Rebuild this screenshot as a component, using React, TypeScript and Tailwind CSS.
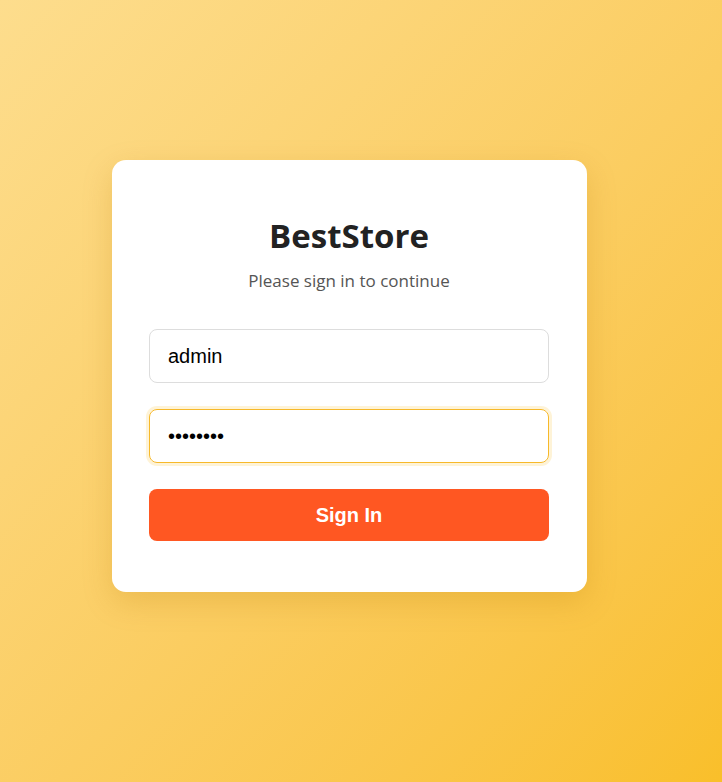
import { useState } from 'react'

export default function App() {
  const [user, setUser] = useState('admin')
  const [pw, setPw] = useState('password')

  return (
    <main className="min-h-[782px] w-full bg-gradient-to-br from-[#fddd8d] to-[#f9bf2a] pt-[160px] pl-[112px]">
      <div className="w-[475px] h-[432px] bg-white rounded-[14px] shadow-[0_10px_30px_rgba(180,120,0,0.22)] pl-[37px] pr-[38px] pt-[54px] font-['Open_Sans',sans-serif]">
        <h1 className="text-center text-[33px] leading-[44px] font-bold text-[#222]">BestStore</h1>
        <p className="text-center text-[17px] leading-[24px] text-[#555] mt-[11px]">Please sign in to continue</p>

        <form className="mt-[36px] flex flex-col" onSubmit={(e) => e.preventDefault()}>
          <input
            value={user}
            onChange={(e) => setUser(e.target.value)}
            className="h-[54px] w-full rounded-[8px] border border-[#dddddd] px-[18px] text-[20px] text-black outline-none font-['Liberation_Sans',Arial,sans-serif]"
          />
          <input
            type="password"
            value={pw}
            onChange={(e) => setPw(e.target.value)}
            className="mt-[26px] h-[54px] w-full rounded-[8px] border border-[#f7b92a] shadow-[0_0_0_3px_rgba(251,191,36,0.18)] px-[18px] text-[20px] text-black outline-none font-['Liberation_Sans',Arial,sans-serif]"
          />
          <button
            type="submit"
            className="mt-[26px] h-[52px] w-full rounded-[8px] bg-[#ff5722] text-white text-[20px] font-bold font-['Liberation_Sans',Arial,sans-serif]"
          >
            Sign In
          </button>
        </form>
      </div>
    </main>
  )
}
